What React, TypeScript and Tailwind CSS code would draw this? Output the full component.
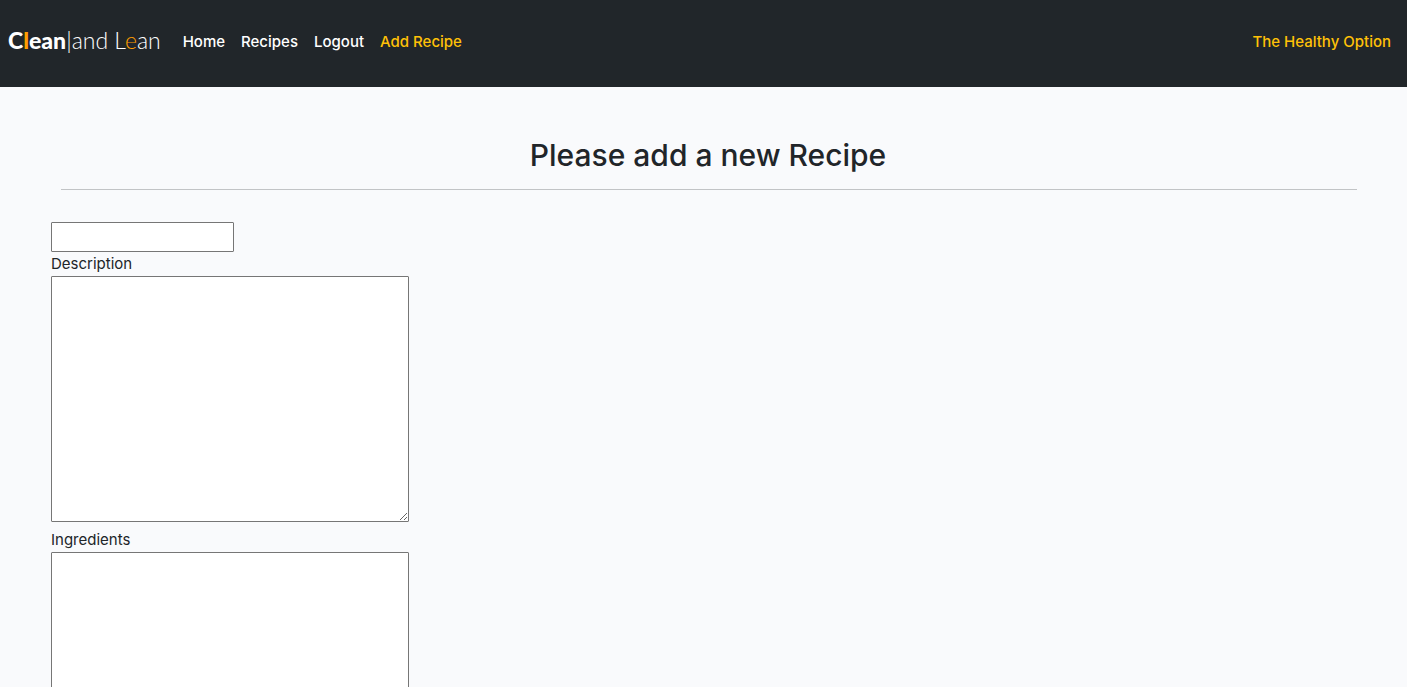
const links = ["Home", "Recipes", "Logout"];

export default function App() {
  return (
    <div className="h-screen overflow-y-auto bg-[#f9fafc] font-['Inter',sans-serif] text-[15px] leading-6 text-[#212529] [scrollbar-width:none]">
      <nav className="flex h-[87px] items-center bg-[#21262a] px-2 pb-1 font-medium">
        <a href="#" className="mr-[22px] pb-1 font-['Lato',sans-serif] text-[23px] leading-7 font-light text-white">
          <span className="font-black">C<span className="text-[#ff9e00]">l</span>ean</span>|and L<span className="text-[#ff9e00]">e</span>an
        </a>
        <div className="flex flex-1 gap-4">
          {links.map((name) => (
            <a key={name} href="#" className="text-white">{name}</a>
          ))}
          <a href="#" className="text-[#ffc107]">Add Recipe</a>
        </div>
        <a href="#" className="mr-2 text-[#ffc107]">The Healthy Option</a>
      </nav>
      <main className="pt-12 pr-[50px] pl-[51px]">
        <h1 className="ml-2 text-center text-[30px] leading-10 font-medium">Please add a new Recipe</h1>
        <hr className="mt-[14px] ml-[10px] border-[#c2c4c6]" />
        <form className="mt-8 flex flex-col items-start">
          <input aria-label="Recipe name" className="h-[30px] w-[183px] rounded-[1px] border border-[#767676] bg-white px-1" />
          <label htmlFor="description">Description</label>
          <textarea id="description" className="h-[246px] w-[358px] rounded-[1px] border border-[#767676] bg-white px-1" />
          <label htmlFor="ingredients" className="mt-[6px]">Ingredients</label>
          <textarea id="ingredients" className="h-[246px] w-[358px] rounded-[1px] border border-[#767676] bg-white px-1" />
        </form>
      </main>
    </div>
  );
}
